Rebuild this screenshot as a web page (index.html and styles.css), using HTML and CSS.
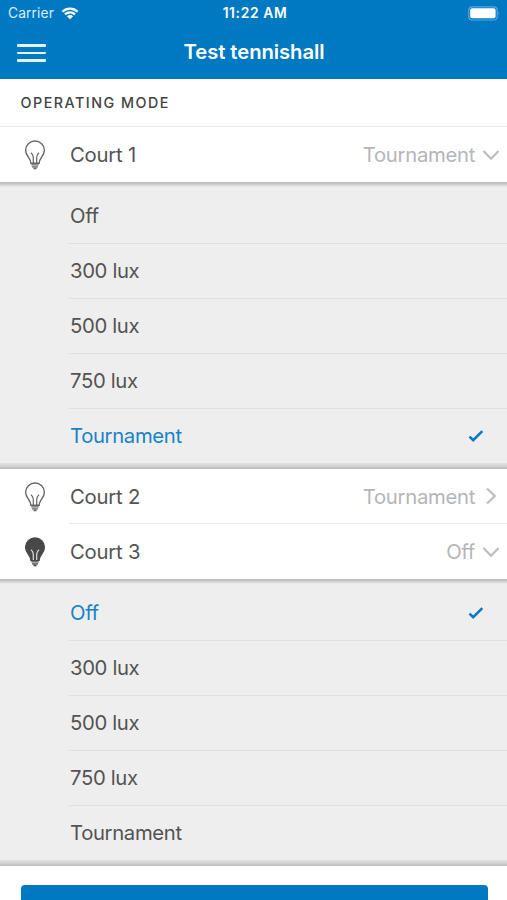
FILE: index.html
```html
<!DOCTYPE html>
<html lang="en">
<head>
<meta charset="utf-8">
<title>Test tennishall</title>
<link rel="stylesheet" href="styles.css">
</head>
<body>
<svg class="defs" aria-hidden="true">
  <symbol id="bulb" viewBox="0 0 22 30">
    <path class="glass" d="M6.900 23.300C6.900 18.400 1.600 15.800 1.600 10.200a9.400 9.200 0 0 1 18.800 0c0 5.600-5.300 8.200-5.300 13.100z"/>
    <path class="filament" d="M9.300 23V17.200Q8.900 14.200 6.900 12.800M12.700 23V17.200Q13.100 14.200 15.100 12.800"/>
    <path class="base" d="M7.300 24.900h7.400M8 26.900h6M9.500 28.500h3"/>
  </symbol>
  <symbol id="down" viewBox="0 0 18 18"><path d="M1.500 5L9 12.700L16.500 5"/></symbol>
  <symbol id="right" viewBox="0 0 18 18"><path d="M5 1.500L12.700 9L5 16.500"/></symbol>
  <symbol id="tick" viewBox="0 0 16 14"><path d="M1.500 7.600L5.200 11.200L14.300 2.200"/></symbol>
</svg>
<header class="header">
  <div class="status">
    <div class="carrier"><span>Carrier</span>
      <svg class="wifi" viewBox="0 0 18 13"><path d="M1.400 4.700a10.900 10.900 0 0 1 15.200 0M4 7.400a7.200 7.200 0 0 1 10 0"/><path class="dot" d="M9 12.300L5.900 9.200a4.400 4.400 0 0 1 6.200 0z"/></svg>
    </div>
    <div class="time">11:22 AM</div>
    <svg class="battery" viewBox="0 0 33 15"><rect class="shell" x=".8" y=".8" width="28.400" height="13.200" rx="3.500"/><rect class="charge" x="2.200" y="2.300" width="25.400" height="10" rx="2"/><path class="cap" d="M30.600 5.200q1.800 2.200 0 4.400z"/></svg>
  </div>
  <div class="nav">
    <div class="menu"><i></i><i></i><i></i></div>
    <h1 class="title">Test tennishall</h1>
  </div>
</header>
<main>
  <h2 class="section">OPERATING MODE</h2>
  <div class="court">
    <svg class="bulb"><use href="#bulb"/></svg>
    <div class="court-body"><span class="name">Court 1</span><span class="mode">Tournament</span><svg class="arrow"><use href="#down"/></svg></div>
  </div>
  <ul class="options">
    <li><span>Off</span></li>
    <li><span>300 lux</span></li>
    <li><span>500 lux</span></li>
    <li><span>750 lux</span></li>
    <li class="selected"><span>Tournament</span><svg class="tick"><use href="#tick"/></svg></li>
  </ul>
  <div class="court lined">
    <svg class="bulb"><use href="#bulb"/></svg>
    <div class="court-body"><span class="name">Court 2</span><span class="mode">Tournament</span><svg class="arrow"><use href="#right"/></svg></div>
  </div>
  <div class="court">
    <svg class="bulb dark"><use href="#bulb"/></svg>
    <div class="court-body"><span class="name">Court 3</span><span class="mode">Off</span><svg class="arrow"><use href="#down"/></svg></div>
  </div>
  <ul class="options">
    <li class="selected"><span>Off</span><svg class="tick"><use href="#tick"/></svg></li>
    <li><span>300 lux</span></li>
    <li><span>500 lux</span></li>
    <li><span>750 lux</span></li>
    <li><span>Tournament</span></li>
  </ul>
  <div class="action"></div>
</main>
</body>
</html>
```
FILE: styles.css
```css
* { box-sizing: border-box; }
body {
  margin: 0;
  height: 900px;
  overflow: hidden;
  background: #fff;
  color: #535353;
  font: 400 20.3px/1 Inter, "Liberation Sans", sans-serif;
}
.defs { display: none; }
.header { height: 79px; background: #0079c3; color: #fff; }
.status {
  display: grid;
  grid-template-columns: 1fr auto 1fr;
  align-items: center;
  height: 27px;
  padding: 0 6px 0 8px;
}
.carrier { display: flex; align-items: center; gap: 7px; padding-top: 1px; font-size: 13.800px; letter-spacing: .1px; color: #d9edf9; }
.wifi { width: 18px; height: 13px; margin-top: -1px; fill: none; stroke: #fff; stroke-width: 2.200; }
.wifi .dot { fill: #fff; stroke: none; }
.time { padding-top: 1px; font-size: 13.800px; font-weight: 600; letter-spacing: .65px; padding-left: 1px; }
.battery { width: 33px; height: 15px; justify-self: end; }
.shell { fill: none; stroke: #58a8da; stroke-width: 1.200; }
.charge { fill: #fff; }
.cap { fill: #7fbde3; }
.nav { display: grid; grid-template-columns: 80px 1fr 80px; align-items: center; height: 50px; }
.menu { display: grid; gap: 5px; width: 29px; margin: 2px 0 0 17px; }
.menu i { height: 2.500px; border-radius: 1px; background: #e5f3fb; }
.title { margin: 0; padding-left: 1px; text-align: center; font-size: 20.300px; font-weight: 600; letter-spacing: -.08px; }
.section {
  height: 48px;
  margin: 0;
  padding-left: 20.500px;
  border-bottom: 1px solid #e9e9e9;
  font-size: 14.300px;
  font-weight: 500;
  line-height: 48px;
  letter-spacing: 1.500px;
  color: #444;
}
.court { display: flex; align-items: center; height: 55px; }
.bulb { width: 22px; height: 30px; margin: 0 23px 0 24px; fill: none; stroke: #666; stroke-width: 1.400; }
.filament { stroke-width: 1.200; }
.dark { fill: #484848; stroke: #484848; --wire: #ddd; }
.filament { fill: none; stroke: var(--wire, #666); }
.court-body { display: flex; flex: 1; align-items: center; height: 100%; padding-right: 7px; }
.lined .court-body { border-bottom: 1px solid #ebebeb; }
.name { flex: 1; padding: 2px 0 0 1px; letter-spacing: -.2px; }
.mode { padding-top: 2px; color: #b5b5b9; letter-spacing: -.3px; }
.arrow { width: 18px; height: 18px; margin-left: 7px; fill: none; stroke: #bdbdc1; stroke-width: 2.200; }
.options {
  height: 287px;
  margin: 0;
  padding: 7px 0 5px 69px;
  list-style: none;
  background:
    linear-gradient(#b9b9b9, #c6c6c6 35%, #eee) top / 100% 5px no-repeat,
    linear-gradient(#e2e2e2, #d4d4d4 50%, #b8b8b8) bottom / 100% 6px no-repeat,
    #eee;
}
.options li { display: flex; align-items: center; justify-content: space-between; height: 55px; padding: 0 23px 0 1px; border-bottom: 1px solid #e0e0e0; letter-spacing: -.35px; }
.options .selected { color: #1683c8; }
.tick { width: 16px; height: 14px; fill: none; stroke: #0878c2; stroke-width: 2.500; }
.action { height: 48px; margin: 19px 19.500px 0 20.500px; border-radius: 4px; background: #0079c3; }
```
